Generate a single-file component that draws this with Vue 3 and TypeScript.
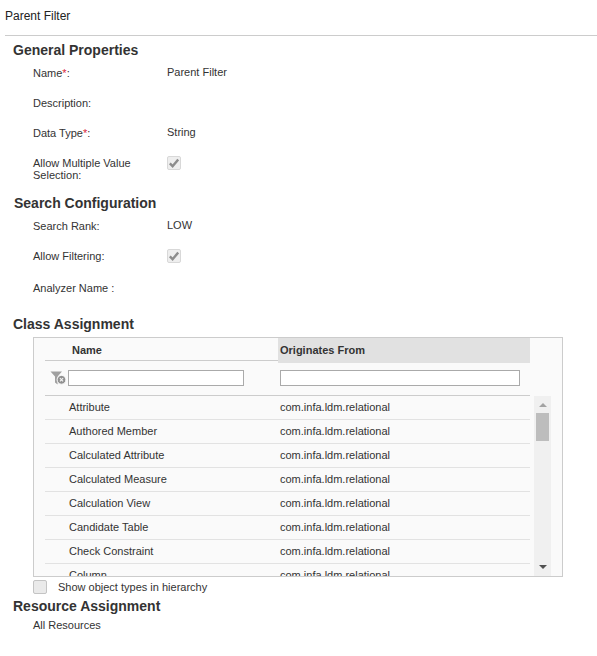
<script setup lang="ts">
interface Field {
  label: string;
  required?: boolean;
  value?: string;
  checked?: boolean;
  tall?: boolean;
  extra?: boolean;
}

const generalFields: Field[] = [
  { label: 'Name', required: true, value: 'Parent Filter' },
  { label: 'Description:' },
  { label: 'Data Type', required: true, value: 'String' },
  { label: 'Allow Multiple Value Selection:', checked: true, tall: true },
];

const searchFields: Field[] = [
  { label: 'Search Rank:', value: 'LOW' },
  { label: 'Allow Filtering:', checked: true },
  { label: 'Analyzer Name :', extra: true },
];

const classRows = [
  'Attribute',
  'Authored Member',
  'Calculated Attribute',
  'Calculated Measure',
  'Calculation View',
  'Candidate Table',
  'Check Constraint',
  'Column',
];
</script>

<template>
  <div class="page">
    <div class="title">Parent Filter</div>

    <h2 class="section first">General Properties</h2>
    <div v-for="f in generalFields" :key="f.label" class="field" :class="{ tall: f.tall }">
      <div class="label">
        {{ f.label }}<template v-if="f.required"><span class="req">*</span>:</template>
      </div>
      <div class="value">
        <span v-if="f.checked" class="check">
          <svg width="10" height="10" viewBox="0 0 10 10"><path d="M0.8 5.4 L3.6 8.2 L9.2 1.6" fill="none" stroke="#8c8c8c" stroke-width="2.4" /></svg>
        </span>
        <template v-else>{{ f.value }}</template>
      </div>
    </div>

    <h2 class="section search">Search Configuration</h2>
    <div v-for="f in searchFields" :key="f.label" class="field" :class="{ extra: f.extra }">
      <div class="label">{{ f.label }}</div>
      <div class="value">
        <span v-if="f.checked" class="check">
          <svg width="10" height="10" viewBox="0 0 10 10"><path d="M0.8 5.4 L3.6 8.2 L9.2 1.6" fill="none" stroke="#8c8c8c" stroke-width="2.4" /></svg>
        </span>
        <template v-else>{{ f.value }}</template>
      </div>
    </div>

    <h2 class="section assign">Class Assignment</h2>
    <div class="grid-box">
      <div class="grid-main">
        <div class="grid-head">
          <div class="col-name head-name">Name</div>
          <div class="col-origin head-origin">Originates From</div>
        </div>
        <div class="grid-filter">
          <svg class="clear-icon" width="17" height="15" viewBox="0 0 17 15">
            <path d="M0.5 0.5 H12 L7.6 5.4 V13.5 L5 11.5 V5.4 Z" fill="#a0a0a0" />
            <circle cx="11.5" cy="8.8" r="4.4" fill="#909090" stroke="#fafafa" />
            <path d="M9.9 7.2 L13.1 10.4 M13.1 7.2 L9.9 10.4" stroke="#f2f2f2" stroke-width="1.2" />
          </svg>
          <input class="filter-input name-input" type="text" />
          <input class="filter-input origin-input" type="text" />
        </div>
        <div v-for="row in classRows" :key="row" class="grid-row">
          <div class="col-name">{{ row }}</div>
          <div class="col-origin">com.infa.ldm.relational</div>
        </div>
      </div>
      <div class="scrollbar">
        <span class="arrow up"></span>
        <span class="thumb"></span>
        <span class="arrow down"></span>
      </div>
    </div>

    <div class="hierarchy">
      <span class="box"></span>
      <span>Show object types in hierarchy</span>
    </div>

    <h2 class="section resource">Resource Assignment</h2>
    <div class="all">All Resources</div>
  </div>
</template>

<style scoped>
.page {
  width: 597px;
  height: 656px;
  overflow: hidden;
  background: #fff;
  color: #333;
  font-family: "Liberation Sans", Arial, sans-serif;
  font-size: 11px;
}

.title {
  height: 36px;
  margin-left: 5px;
  padding-top: 10px;
  box-sizing: border-box;
  border-bottom: 1px solid #ccc;
  line-height: 13px;
  font-size: 12px;
  color: #222;
}

.section {
  margin: 0 0 0 13px;
  font-size: 14px;
  line-height: 16px;
  font-weight: bold;
  color: #333;
}

.section.first {
  margin-top: 6px;
}

.section.search {
  margin-top: 14px;
  margin-left: 14px;
}

.section.assign {
  margin-top: 13px;
}

.section.resource {
  margin-top: 1px;
}

.field {
  display: grid;
  grid-template-columns: 134px 1fr;
  height: 30px;
  margin-left: 33px;
  padding-top: 9px;
  box-sizing: border-box;
  line-height: 12px;
}

.field.tall {
  height: 33px;
}

.field.extra {
  padding-top: 11px;
  height: 32px;
}

.label {
  width: 112px;
}

.req {
  color: #d9263c;
}

.value {
  margin-top: -1px;
}

.check {
  display: flex;
  align-items: center;
  justify-content: center;
  width: 14px;
  height: 14px;
  box-sizing: border-box;
  border: 1px solid #d8d8d8;
  border-radius: 2px;
  background: #eee;
}

.grid-box {
  display: flex;
  width: 530px;
  height: 240px;
  margin: 5px 0 0 33px;
  box-sizing: border-box;
  border: 1px solid #ccc;
  background: #fafafa;
  overflow: hidden;
}

.grid-main {
  width: 485px;
  margin-left: 11px;
  flex-shrink: 0;
}

.grid-head {
  display: grid;
  grid-template-columns: 233px 252px;
  height: 22px;
  border-bottom: 1px solid #ccc;
  font-weight: bold;
  font-size: 11px;
  line-height: 25px;
}

.head-name {
  padding-left: 27px;
}

.head-origin {
  background: #e1e1e1;
  padding-left: 2px;
}

.grid-filter {
  display: flex;
  align-items: center;
  height: 34px;
  border-bottom: 1px solid #ccc;
}

.clear-icon {
  margin-left: 5px;
  margin-right: 1px;
  flex-shrink: 0;
}

.filter-input {
  height: 16px;
  padding: 0;
  box-sizing: border-box;
  border: 1px solid #aaa;
  background: #fff;
  outline: none;
}

.name-input {
  width: 176px;
}

.origin-input {
  width: 240px;
  margin-left: 36px;
}

.grid-row {
  display: grid;
  grid-template-columns: 233px 252px;
  height: 24px;
  box-sizing: border-box;
  border-bottom: 1px solid #e2e2e2;
  line-height: 23px;
  color: #333;
}

.grid-row .col-name {
  padding-left: 24px;
}

.grid-row .col-origin {
  padding-left: 2px;
}

.scrollbar {
  position: relative;
  width: 17px;
  height: 180px;
  margin: 58px 0 0 4px;
  flex-shrink: 0;
  background: #f0f0f0;
}

.thumb {
  position: absolute;
  left: 2px;
  top: 17px;
  width: 13px;
  height: 28px;
  background: #bdbdbd;
}

.arrow {
  position: absolute;
  left: 5px;
  width: 0;
  height: 0;
  border-left: 4px solid transparent;
  border-right: 4px solid transparent;
}

.arrow.up {
  top: 7px;
  border-bottom: 4px solid #a3a3a3;
}

.arrow.down {
  bottom: 7px;
  border-top: 4px solid #505050;
}

.hierarchy {
  display: flex;
  align-items: center;
  gap: 11px;
  height: 20px;
  margin-left: 33px;
  color: #333;
}

.box {
  width: 14px;
  height: 14px;
  box-sizing: border-box;
  border: 1px solid #c4c4c4;
  border-radius: 2px;
  background: #eaeaea;
}

.all {
  margin: 5px 0 0 33px;
  line-height: 13px;
}
</style>

<style>
html,
body {
  margin: 0;
  background: #fff;
}
</style>
